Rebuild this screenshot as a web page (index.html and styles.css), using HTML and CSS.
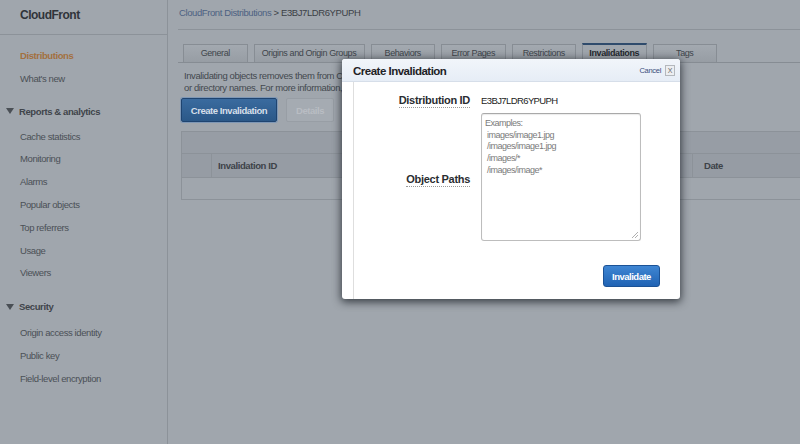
FILE: index.html
```html
<!DOCTYPE html>
<html lang="en">
<head>
<meta charset="utf-8">
<title>CloudFront - Create Invalidation</title>
<link rel="stylesheet" href="styles.css">
</head>
<body>
<div class="app">
  <aside class="sidebar">
    <div class="brand">CloudFront</div>
    <nav class="nav">
      <ul class="group">
        <li class="item active">Distributions</li>
        <li class="item">What's new</li>
      </ul>
      <div class="section">
        <div class="section-title"><span class="caret"></span>Reports &amp; analytics</div>
        <ul class="group">
          <li class="item">Cache statistics</li>
          <li class="item">Monitoring</li>
          <li class="item">Alarms</li>
          <li class="item">Popular objects</li>
          <li class="item">Top referrers</li>
          <li class="item">Usage</li>
          <li class="item">Viewers</li>
        </ul>
      </div>
      <div class="section section-security">
        <div class="section-title"><span class="caret"></span>Security</div>
        <ul class="group">
          <li class="item">Origin access identity</li>
          <li class="item">Public key</li>
          <li class="item">Field-level encryption</li>
        </ul>
      </div>
    </nav>
  </aside>

  <main class="main">
    <div class="crumbs"><span class="crumb-link">CloudFront Distributions</span> &gt; E3BJ7LDR6YPUPH</div>

    <div class="tabs">
      <div class="tab">General</div>
      <div class="tab tab-wide">Origins and Origin Groups</div>
      <div class="tab">Behaviors</div>
      <div class="tab">Error Pages</div>
      <div class="tab">Restrictions</div>
      <div class="tab tab-active">Invalidations</div>
      <div class="tab">Tags</div>
    </div>

    <p class="desc">Invalidating objects removes them from CloudFront edge caches. A faster and less expensive method is to use versioned object<br>or directory names. For more information, see Invalidating Objects in the Amazon CloudFront Developer Guide.</p>

    <div class="actions">
      <button class="btn btn-primary">Create Invalidation</button>
      <button class="btn btn-disabled">Details</button>
    </div>

    <div class="table">
      <div class="row row-top"></div>
      <div class="row row-head">
        <div class="cell cell-check"></div>
        <div class="cell cell-id">Invalidation ID</div>
        <div class="cell cell-status"></div>
        <div class="cell cell-date">Date</div>
      </div>
      <div class="row row-empty"></div>
    </div>
  </main>

  <div class="modal">
    <div class="modal-head">
      <div class="modal-title">Create Invalidation</div>
      <div class="modal-cancel"><span>Cancel</span><span class="close-box">X</span></div>
    </div>
    <div class="modal-body">
      <div class="form">
        <div class="label-cell"><span class="label">Distribution ID</span></div>
        <div class="value">E3BJ7LDR6YPUPH</div>
        <div class="label-cell label-mid"><span class="label">Object Paths</span></div>
        <div class="paths">
          <div class="paths-text">Examples:<br>&nbsp;images/image1.jpg<br>&nbsp;/images/image1.jpg<br>&nbsp;/images/*<br>&nbsp;/images/image*</div>
          <svg class="grip" width="8" height="8" viewBox="0 0 8 8"><path d="M7 1L1 7M7 4L4 7" stroke="#b0b0b0" stroke-width="1"/></svg>
        </div>
      </div>
      <div class="modal-foot">
        <button class="btn-invalidate">Invalidate</button>
      </div>
    </div>
  </div>
</div>
</body>
</html>
```

FILE: styles.css
```css
* { box-sizing: border-box; }
html, body { margin: 0; padding: 0; }
body {
  background: #a0a6ad;
  font-family: "Liberation Sans", Arial, sans-serif;
  font-size: 9.5px;
  letter-spacing: -0.4px;
  color: #43484e;
  width: 800px;
  height: 444px;
  overflow: hidden;
}
ul { list-style: none; margin: 0; padding: 0; }
button { font-family: inherit; letter-spacing: inherit; }

.app {
  position: relative;
  display: flex;
  width: 800px;
  height: 444px;
  overflow: hidden;
}

/* Sidebar */
.sidebar {
  width: 168px;
  flex: none;
  border-right: 1px solid #8c9299;
  background: #a0a6ad;
}
.brand {
  height: 35px;
  border-bottom: 1px solid #8c9299;
  padding: 8px 0 0 20px;
  font-size: 12px;
  letter-spacing: -0.5px;
  font-weight: bold;
  color: #30343a;
}
.nav { padding-top: 10px; }
.item {
  height: 22.8px;
  line-height: 22.8px;
  padding-left: 20px;
  color: #4b5056;
}
.item.active { color: #a3703f; font-weight: bold; }
.section { margin-top: 9px; }
.section-security { margin-top: 10px; }
.section-title {
  height: 23px;
  line-height: 23px;
  padding-left: 6px;
  font-weight: bold;
  color: #3f444a;
  display: flex;
  align-items: center;
  margin-bottom: 3px;
}
.section-security .section-title { margin-bottom: 4px; }
.caret {
  width: 0; height: 0;
  border-left: 4.5px solid transparent;
  border-right: 4.5px solid transparent;
  border-top: 6px solid #4a4f55;
  margin-right: 5px;
}

/* Main */
.main {
  flex: 1;
  min-width: 0;
  padding-left: 10px;
  overflow: hidden;
}
.crumbs {
  height: 30px;
  border-bottom: 1px solid #8c9299;
  padding: 7px 0 0 1px;
  color: #3b4046;
  white-space: nowrap;
}
.crumb-link { color: #4d6182; }

.tabs {
  margin-top: 14px;
  padding-left: 5px;
  display: flex;
  gap: 6px;
  border-bottom: 1px solid #868c93;
  height: 19px;
}
.tab {
  flex: none;
  width: 64.5px;
  height: 18px;
  line-height: 17px;
  text-align: center;
  border: 1px solid #878d94;
  border-bottom: none;
  background: linear-gradient(#a3a9b0, #979da4);
  color: #40454b;
  white-space: nowrap;
  font-size: 9px;
}
.tab-wide { width: 111px; }
.tab-active {
  background: #a0a6ad;
  border-top: 2px solid #2f4b6c;
  height: 19px;
  margin-top: -1px;
  font-weight: bold;
  color: #25292e;
  line-height: 16px;
}

.desc {
  margin: 7px 0 0 6px;
  width: 158px;
  overflow: hidden;
  line-height: 12px;
  white-space: nowrap;
  color: #43484e;
}

.actions {
  display: flex;
  gap: 9px;
  margin: 4px 0 0 3px;
}
.btn {
  height: 24px;
  padding: 0;
  font-size: 9.5px;
  letter-spacing: -0.45px;
  font-weight: bold;
  border-radius: 2px;
  white-space: nowrap;
}
.btn-primary {
  width: 96px;
  background: linear-gradient(#3a6b9f, #2b5888);
  border: 1px solid #1f4470;
  box-shadow: 0 0 0 1px #7e97b5;
  color: #d6dfe9;
}
.btn-disabled {
  width: 48px;
  background: #a5abb2;
  border: 1px solid #989ea5;
  color: #b9bdc3;
}

.table {
  margin: 9px 0 0 3px;
  border-left: 1px solid #8c9299;
}
.row { display: flex; border-top: 1px solid #8c9299; }
.row-top { height: 22px; background: #979da5; }
.row-head { height: 24px; background: #969ca4; }
.row-empty {
  height: 23px;
  border-bottom: 1px solid #8c9299;
  margin-left: -1px;
}
.cell {
  height: 100%;
  line-height: 23px;
  font-weight: bold;
  color: #3d4248;
}
.cell-check { width: 30px; border-right: 1px solid #8c9299; }
.cell-id { width: 240px; padding-left: 6px; border-right: 1px solid #8c9299; }
.cell-status { width: 241px; border-right: 1px solid #8c9299; }
.cell-date { flex: 1; padding-left: 11px; }

/* Modal */
.modal {
  position: absolute;
  left: 342px;
  top: 59px;
  width: 338px;
  height: 240px;
  background: #fff;
  border-radius: 3px;
  box-shadow: 0 2px 9px 1px rgba(20, 25, 32, 0.75);
  display: flex;
  flex-direction: column;
  overflow: hidden;
}
.modal-head {
  height: 23px;
  flex: none;
  background: linear-gradient(#f1f5fa, #e6edf6);
  border-bottom: 1px solid #d6dee9;
  display: flex;
  align-items: center;
  justify-content: space-between;
  padding: 1px 5px 0 11px;
}
.modal-title {
  font-size: 11.5px;
  letter-spacing: -0.5px;
  font-weight: bold;
  color: #1e2226;
}
.modal-cancel {
  display: flex;
  align-items: center;
  gap: 4px;
  font-size: 7.5px;
  letter-spacing: -0.3px;
  color: #3b4d7c;
}
.close-box {
  width: 10px;
  height: 11px;
  border: 1px solid #b4b8bd;
  background: #eceef1;
  color: #666;
  font-size: 7px;
  letter-spacing: 0;
  line-height: 9px;
  text-align: center;
}
.modal-body {
  flex: 1;
  margin-left: 11px;
  border-left: 1px solid #dedede;
  padding: 12px 20px 12px 0;
  display: flex;
  flex-direction: column;
}
.form {
  display: grid;
  grid-template-columns: 116px 160px;
  column-gap: 11px;
  row-gap: 5px;
  grid-template-rows: 14px 128px;
}
.label-cell {
  display: flex;
  justify-content: flex-end;
  align-items: center;
}
.label-mid { padding-top: 6px; }
.label {
  font-size: 11px;
  letter-spacing: -0.3px;
  font-weight: bold;
  color: #2a2d31;
  border-bottom: 1px dotted #9a9a9a;
  line-height: 13px;
}
.value {
  font-size: 9.5px;
  letter-spacing: -0.6px;
  color: #222;
  line-height: 14px;
}
.paths {
  position: relative;
  border: 1px solid #bdbdbd;
  border-top-color: #a9a9a9;
  border-radius: 3px;
  box-shadow: inset 0 1px 1px rgba(0,0,0,0.08);
  padding: 4px 3px;
}
.paths-text {
  font-size: 9px;
  letter-spacing: -0.5px;
  line-height: 11.7px;
  color: #7a7a7a;
}
.grip {
  position: absolute;
  right: 1px;
  bottom: 1px;
}
.modal-foot {
  margin-top: auto;
  display: flex;
  justify-content: flex-end;
}
.btn-invalidate {
  width: 57px;
  height: 22px;
  border-radius: 3px;
  border: 1px solid #1b5296;
  background: linear-gradient(#3f86d3, #2063b4);
  color: #fff;
  font-size: 9.5px;
  letter-spacing: -0.5px;
  font-weight: bold;
  padding: 0;
}
```
